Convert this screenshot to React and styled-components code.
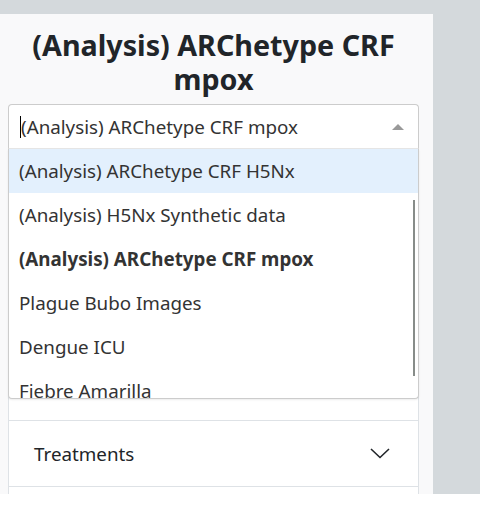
import React, { useState } from 'react';
import styled, { createGlobalStyle } from 'styled-components';

const GlobalStyle = createGlobalStyle`
    html, body {
        margin: 0;
        padding: 0;
        background: #ffffff;
        overflow: hidden;
    }
    body {
        font-family: "Noto Sans", "Open Sans", sans-serif;
        color: #212529;
    }
`;

const Backdrop = styled.div`
    background: #d4d9dc;
    height: 494px;
    padding-top: 14px;
    box-sizing: border-box;
`;

const Panel = styled.div`
    position: relative;
    width: 433px;
    min-height: 560px;
    background: #f9f9fa;
    padding: 14px 14px 0 8px;
    box-sizing: border-box;
`;

const Title = styled.h1`
    margin: 0 0 8px 0;
    font-size: 28.7px;
    line-height: 34px;
    font-weight: 700;
    text-align: center;
`;

const SelectWrap = styled.div`
    position: relative;
    z-index: 2;
`;

const Control = styled.div`
    display: flex;
    align-items: center;
    height: 45px;
    padding: 0 12px 0 11px;
    background: #ffffff;
    border: 1px solid #cccccc;
    border-radius: 4px 4px 0 0;
    border-bottom-color: #e6e6e6;
    box-sizing: border-box;
`;

const Caret = styled.span`
    width: 1px;
    height: 22px;
    background: #000;
`;

const Value = styled.span`
    flex: 1;
    font-size: 18.8px;
    color: #333333;
`;

const Arrow = styled.span`
    width: 0;
    height: 0;
    border-left: 6px solid transparent;
    border-right: 6px solid transparent;
    border-bottom: 6px solid #999999;
    margin-right: 2px;
`;

const Menu = styled.div`
    position: absolute;
    left: 0;
    right: 0;
    top: 45px;
    height: 249px;
    overflow: hidden;
    background: #ffffff;
    border: 1px solid #cccccc;
    border-top: none;
    border-radius: 0 0 4px 4px;
    box-shadow: 0 1px 2px rgba(0, 0, 0, 0.08);
`;

const Option = styled.div`
    height: 44px;
    display: flex;
    align-items: center;
    padding: 0 10px;
    font-size: 18.8px;
    color: #333333;
    background: ${(p) => (p.$focused ? '#e3f0fd' : 'transparent')};
    font-weight: ${(p) => (p.$selected ? 700 : 400)};
`;

const Scrollbar = styled.div`
    position: absolute;
    right: 3px;
    top: 51px;
    width: 2px;
    height: 176px;
    background: #878c89;
`;

const Accordion = styled.div`
    margin-top: 7px;
    background: #ffffff;
    border: 1px solid #dee2e6;
    border-bottom: none;
`;

const Item = styled.div`
    height: 66px;
    display: flex;
    align-items: center;
    justify-content: space-between;
    padding: 0 28px 0 25px;
    border-bottom: 1px solid #dee2e6;
    box-sizing: border-box;
    font-size: 18.8px;
    color: #212529;
`;

const options = [
    '(Analysis) ARChetype CRF H5Nx',
    '(Analysis) H5Nx Synthetic data',
    '(Analysis) ARChetype CRF mpox',
    'Plague Bubo Images',
    'Dengue ICU',
    'Fiebre Amarilla',
];

const sections = ['Demographics', 'Comorbidities', 'Symptoms', 'Complications', 'Treatments', 'Outcomes'];

function Chevron() {
    return (
        <svg width="20" height="11" viewBox="0 0 20 11" fill="none">
            <path d="M1 1l9 8.5L19 1" stroke="#212529" strokeWidth="1.6" />
        </svg>
    );
}

export default function App() {
    const [selected] = useState('(Analysis) ARChetype CRF mpox');

    return (
        <>
            <GlobalStyle />
            <Backdrop>
                <Panel>
                    <Title>(Analysis) ARChetype CRF<br />mpox</Title>
                    <SelectWrap>
                        <Control>
                            <Caret />
                            <Value>{selected}</Value>
                            <Arrow />
                        </Control>
                        <Menu>
                            {options.map((o, i) => (
                                <Option key={o} $focused={i === 0} $selected={o === selected}>{o}</Option>
                            ))}
                            <Scrollbar />
                        </Menu>
                    </SelectWrap>
                    <Accordion>
                        {sections.map((s) => (
                            <Item key={s}>
                                {s}
                                <Chevron />
                            </Item>
                        ))}
                    </Accordion>
                </Panel>
            </Backdrop>
        </>
    );
}
